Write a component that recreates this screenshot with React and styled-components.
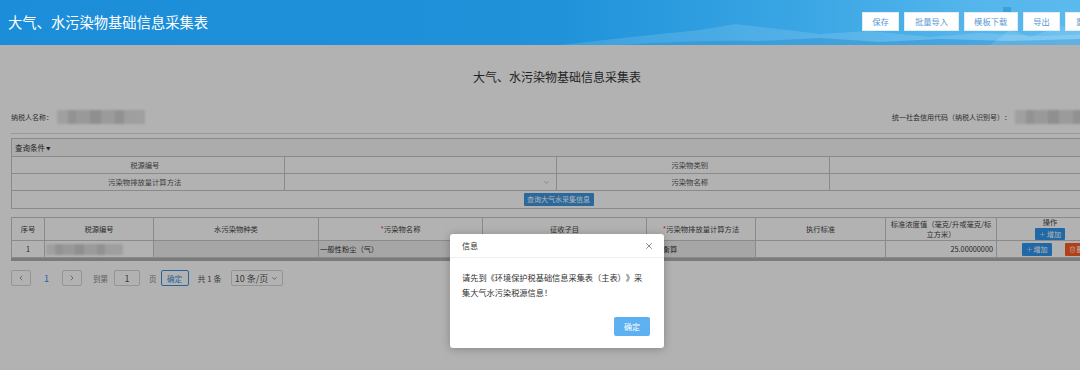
import React from 'react';
import styled, { createGlobalStyle } from 'styled-components';
import { Plus, Trash2, ChevronLeft, ChevronRight, ChevronDown, X } from 'lucide-react';

const FONT = `"Noto Sans CJK SC", "Noto Sans", sans-serif`;

const mountainSvg = `<svg xmlns='http://www.w3.org/2000/svg' viewBox='0 0 1114 45' preserveAspectRatio='none'>
<path d='M560 45 L640 36 L700 30 L735 24 L770 28 L820 34 L870 31 L930 37 L980 33 L1040 36 L1114 33 L1114 45 Z' fill='#ffffff' fill-opacity='0.13'/>
<path d='M620 45 Q700 40 760 41 L820 38 L880 42 L940 39 L1010 41 L1114 38 L1114 45 Z' fill='#2b8fd2' fill-opacity='0.55'/>
<path d='M990 45 L1010 30 L1030 37 L1060 26 L1114 34 L1114 45 Z' fill='#ffffff' fill-opacity='0.12'/>
<rect x='1003' y='7' width='8' height='6' fill='#3a98d6' fill-opacity='0.8'/>
</svg>`;
const mountainUrl = `url("data:image/svg+xml;utf8,${encodeURIComponent(mountainSvg)}")`;

const GlobalStyle = createGlobalStyle`
  html, body { margin: 0; padding: 0; overflow: hidden; background: #fff; }
  body { font-family: ${FONT}; text-spacing-trim: space-all; }
  #root { width: 1114px; }
  * { box-sizing: border-box; }
`;

const Header = styled.header`
  height: 45px;
  display: flex;
  align-items: center;
  justify-content: space-between;
  padding: 0 11px 0 8px;
  background: ${mountainUrl} no-repeat left bottom / 100% 100%,
    linear-gradient(90deg, #1c8dd8 0%, #1f92da 50%, #3aa6e4 72%, #55b6ec 88%, #5dbbee 100%);
`;

const AppTitle = styled.h1`
  margin: 0;
  font-size: 14.3px;
  font-weight: 400;
  line-height: 1;
  color: #fff;
`;

const ToolGroup = styled.div`
  display: flex;
  gap: 5px;
  align-self: flex-start;
  margin-top: 12px;
`;

const ToolButton = styled.button`
  height: 19px;
  padding: 0 9.5px;
  background: #fff;
  border: 1px solid #e3edf7;
  color: #5a98d6;
  font-family: ${FONT};
  font-size: 8.3px;
  line-height: 1;
  flex-shrink: 0;
`;

const Main = styled.main`
  position: relative;
  height: 325px;
  overflow: hidden;
`;

const Page = styled.div`
  padding: 0 11px;
`;

const PageTitle = styled.h2`
  margin: 0;
  padding-top: 24px;
  text-align: center;
  font-size: 12px;
  line-height: 16px;
  font-weight: 400;
  color: #333;
`;

const InfoRow = styled.div`
  margin-top: 25px;
  height: 14px;
  display: flex;
  align-items: center;
  justify-content: space-between;
`;

const InfoItem = styled.div`
  display: flex;
  align-items: center;
  gap: 4px;
  font-size: 7px;
  color: #444;
`;

const Blurred = styled.div`
  width: ${(p) => p.$w}px;
  height: ${(p) => p.$h || 14}px;
  filter: blur(1.2px);
  background:
    linear-gradient(90deg, #e6e6e6 0 12%, #d2d2d2 12% 22%, #dcdcdc 22% 38%, #cdcdcd 38% 50%, #dedede 50% 66%, #d0d0d0 66% 76%, #e4e4e4 76% 100%);
`;

const Divider = styled.div`
  margin-top: 9px;
  height: 1px;
  background: #dcdcdc;
`;

const Panel = styled.section`
  margin-top: 4px;
  border: 1px solid #c6c6c6;
`;

const PanelHead = styled.div`
  height: 18px;
  display: flex;
  align-items: center;
  padding-left: 3px;
  font-size: 7.5px;
  color: #333;
  border-bottom: 1px solid #c6c6c6;
  background: #f7f7f7;
`;

const QueryGrid = styled.div`
  display: grid;
  grid-template-columns: repeat(4, 1fr);
`;

const QueryCell = styled.div`
  height: 17px;
  display: flex;
  align-items: center;
  justify-content: ${(p) => (p.$label ? 'center' : 'flex-end')};
  padding-right: 6px;
  font-size: 7.3px;
  color: #555;
  border-right: 1px solid #c6c6c6;
  border-bottom: 1px solid #c6c6c6;
  &:nth-child(4n) { border-right: none; }
`;

const QueryAction = styled.div`
  grid-column: 1 / -1;
  height: 17px;
  display: flex;
  align-items: center;
  justify-content: center;
`;

const PrimaryButton = styled.button`
  height: 13px;
  padding: 0 3.5px;
  border: none;
  border-radius: 1px;
  background: #3d97e2;
  color: #fff;
  font-family: ${FONT};
  font-size: 7px;
  line-height: 1;
  margin-left: 3px;
`;

const Table = styled.table`
  margin-top: 8px;
  width: 1092px;
  border-collapse: collapse;
  table-layout: fixed;
`;

const Th = styled.th`
  height: 23px;
  padding: 0 3px;
  border: 1px solid #c6c6c6;
  font-size: 7.3px;
  font-weight: 400;
  line-height: 10px;
  color: #444;
  text-align: center;
`;

const Td = styled.td`
  height: 17px;
  padding: 0 ${(p) => (p.$align === 'right' ? '3px' : '1px')};
  border: 1px solid #c6c6c6;
  font-size: 7.3px;
  color: #333;
  text-align: ${(p) => p.$align || 'center'};
  background: ${(p) => (p.$readonly ? '#eeeeee' : '#fff')};
  white-space: nowrap;
  overflow: hidden;
`;

const Req = styled.span`
  color: #e0322a;
`;

const OpHead = styled.div`
  display: flex;
  flex-direction: column;
  align-items: center;
  gap: 1px;
  line-height: 9px;
`;

const SmallButton = styled.button`
  height: ${(p) => p.$h || 13}px;
  padding: 0 4px;
  display: inline-flex;
  align-items: center;
  gap: 1px;
  border: none;
  border-radius: 1px;
  background: ${(p) => (p.$danger ? '#ff5b22' : '#2f96ee')};
  color: #fff;
  font-family: ${FONT};
  font-size: 7px;
  line-height: 1;
`;

const OpCell = styled.div`
  display: flex;
  justify-content: center;
  gap: 13px;
  padding-left: 16px;
`;

const ScrollBar = styled.div`
  width: 1092px;
  height: 3px;
  background: #b0b0b0;
`;

const Pager = styled.div`
  margin-top: 9px;
  height: 16px;
  display: flex;
  align-items: center;
  font-size: 7.5px;
  color: #666;
`;

const PagerBox = styled.button`
  width: ${(p) => p.$w || 20}px;
  height: 16px;
  padding: 0;
  display: inline-flex;
  align-items: center;
  justify-content: center;
  gap: 3px;
  border: 1px solid ${(p) => (p.$active ? '#3d8fe0' : '#d6d6d6')};
  border-radius: 2px;
  background: #fff;
  color: ${(p) => (p.$active ? '#3d8fe0' : '#555')};
  font-family: ${FONT};
  font-size: ${(p) => p.$fs || 7.5}px;
  margin-left: ${(p) => p.$ml || 0}px;
`;

const PageNum = styled.span`
  margin: 0 13px;
  font-size: 9px;
  color: #2d8cf0;
`;

const PagerText = styled.span`
  margin-left: ${(p) => p.$ml || 0}px;
  font-size: ${(p) => p.$fs || 7.5}px;
  color: ${(p) => p.$c || '#888'};
`;

const Overlay = styled.div`
  position: absolute;
  inset: 0;
  background: rgba(0, 0, 0, 0.3);
`;

const Dialog = styled.div`
  position: absolute;
  left: 450px;
  top: 189px;
  width: 214px;
  height: 114px;
  display: flex;
  flex-direction: column;
  background: #fff;
  border-radius: 3px;
  box-shadow: 0 1px 8px rgba(0, 0, 0, 0.25);
`;

const DialogHead = styled.div`
  height: 24px;
  display: flex;
  align-items: center;
  justify-content: space-between;
  padding: 0 10px 0 12px;
  border-bottom: 1px solid #eeeeee;
  font-size: 8px;
  color: #333;
`;

const DialogBody = styled.div`
  padding: 12px 17px 0 12px;
  font-size: 8.2px;
  line-height: 15px;
  color: #333;
  text-spacing-trim: space-all;
  word-break: break-all;
`;

const DialogFoot = styled.div`
  margin-top: auto;
  display: flex;
  justify-content: flex-end;
  padding: 0 14px 12px;
`;

const DialogButton = styled.button`
  width: 36px;
  height: 19px;
  border: none;
  border-radius: 2px;
  background: #5db1f0;
  color: #fff;
  font-family: ${FONT};
  font-size: 8px;
`;

const Caret = styled.span`
  font-size: 4.5px;
  margin-left: 1px;
`;

const cols = [33, 109, 165, 164, 164, 109, 130, 111, 107];

export default function App() {
  return (
    <>
      <GlobalStyle />
      <Header>
        <AppTitle>大气、水污染物基础信息采集表</AppTitle>
        <ToolGroup>
          <ToolButton>保存</ToolButton>
          <ToolButton>批量导入</ToolButton>
          <ToolButton>模板下载</ToolButton>
          <ToolButton>导出</ToolButton>
          <ToolButton>重置</ToolButton>
        </ToolGroup>
      </Header>
      <Main>
        <Page>
          <PageTitle>大气、水污染物基础信息采集表</PageTitle>
          <InfoRow>
            <InfoItem>
              纳税人名称：
              <Blurred $w={88} />
            </InfoItem>
            <InfoItem>
              统一社会信用代码（纳税人识别号）：
              <Blurred $w={88} />
            </InfoItem>
          </InfoRow>
          <Divider />
          <Panel>
            <PanelHead>
              查询条件<Caret>▼</Caret>
            </PanelHead>
            <QueryGrid>
              <QueryCell $label>税源编号</QueryCell>
              <QueryCell />
              <QueryCell $label>污染物类别</QueryCell>
              <QueryCell />
              <QueryCell $label>污染物排放量计算方法</QueryCell>
              <QueryCell>
                <ChevronDown size={7} strokeWidth={1.6} color="#777" />
              </QueryCell>
              <QueryCell $label>污染物名称</QueryCell>
              <QueryCell />
              <QueryAction>
                <PrimaryButton>查询大气水采集信息</PrimaryButton>
              </QueryAction>
            </QueryGrid>
          </Panel>
          <Table>
            <colgroup>
              {cols.map((w, i) => (
                <col key={i} style={{ width: w }} />
              ))}
            </colgroup>
            <thead>
              <tr>
                <Th>序号</Th>
                <Th>税源编号</Th>
                <Th>水污染物种类</Th>
                <Th><Req>*</Req>污染物名称</Th>
                <Th>征收子目</Th>
                <Th><Req>*</Req>污染物排放量计算方法</Th>
                <Th>执行标准</Th>
                <Th>标准浓度值（毫克/升或毫克/标立方米）</Th>
                <Th>
                  <OpHead>
                    操作
                    <SmallButton $h={12}>
                      <Plus size={7} strokeWidth={1.4} />增加
                    </SmallButton>
                  </OpHead>
                </Th>
              </tr>
            </thead>
            <tbody>
              <tr>
                <Td>1</Td>
                <Td $align="left">
                  <Blurred $w={77} $h={11} />
                </Td>
                <Td $readonly />
                <Td $readonly $align="left">一般性粉尘（气）</Td>
                <Td $readonly $align="left">一般性粉尘</Td>
                <Td $readonly $align="left">物料衡算</Td>
                <Td />
                <Td $align="right">25.00000000</Td>
                <Td>
                  <OpCell>
                    <SmallButton>
                      <Plus size={7} strokeWidth={1.4} />增加
                    </SmallButton>
                    <SmallButton $danger>
                      <Trash2 size={7} strokeWidth={1.6} />删除
                    </SmallButton>
                  </OpCell>
                </Td>
              </tr>
            </tbody>
          </Table>
          <ScrollBar />
          <Pager>
            <PagerBox>
              <ChevronLeft size={8} strokeWidth={1.8} />
            </PagerBox>
            <PageNum>1</PageNum>
            <PagerBox>
              <ChevronRight size={8} strokeWidth={1.8} />
            </PagerBox>
            <PagerText $ml={11}>到第</PagerText>
            <PagerBox $w={26} $ml={6} $fs={9}>1</PagerBox>
            <PagerText $ml={9}>页</PagerText>
            <PagerBox $w={28} $ml={4} $active>确定</PagerBox>
            <PagerText $ml={9} $fs={8} $c="#555">共 1 条</PagerText>
            <PagerBox $w={52} $ml={9} $fs={9}>
              10 条/页
              <ChevronDown size={7} strokeWidth={2.2} />
            </PagerBox>
          </Pager>
        </Page>
        <Overlay />
        <Dialog>
          <DialogHead>
            信息
            <X size={10} strokeWidth={1.5} color="#444" />
          </DialogHead>
          <DialogBody>请先到《环境保护税基础信息采集表（主表）》采集大气水污染税源信息！</DialogBody>
          <DialogFoot>
            <DialogButton>确定</DialogButton>
          </DialogFoot>
        </Dialog>
      </Main>
    </>
  );
}
